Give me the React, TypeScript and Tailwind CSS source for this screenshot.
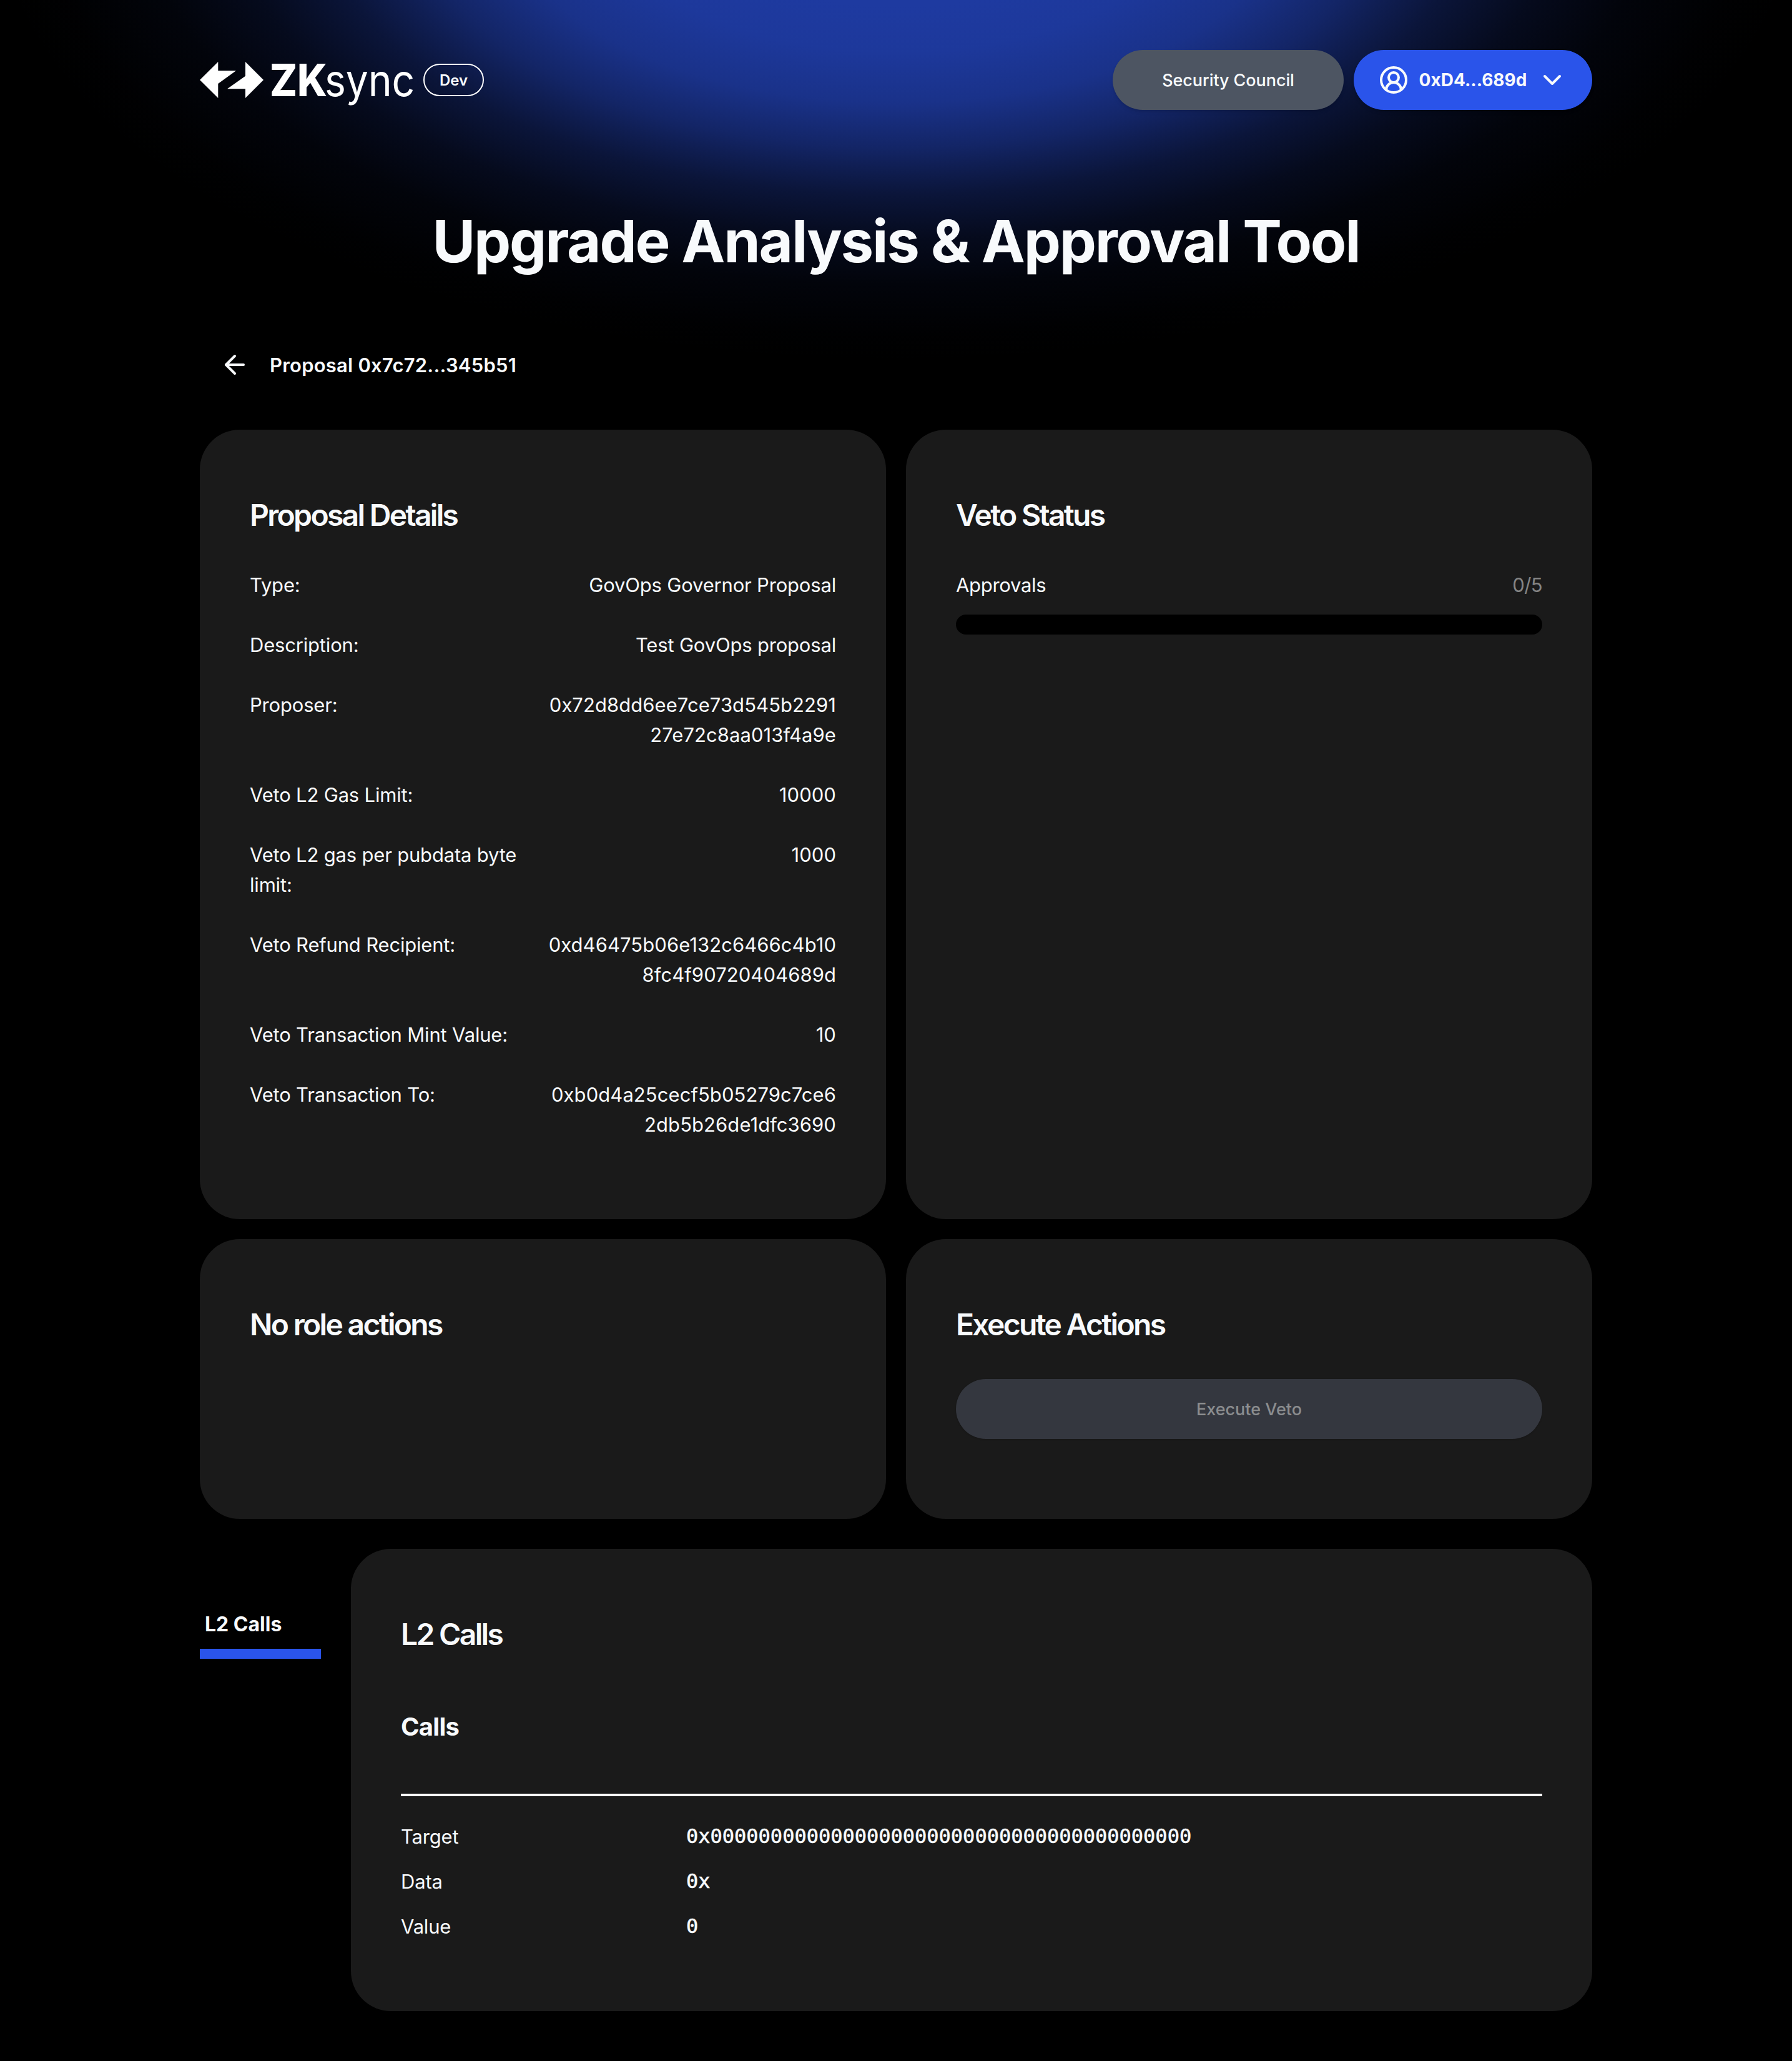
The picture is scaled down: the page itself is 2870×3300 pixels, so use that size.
import type { ReactNode } from "react";
import { ArrowLeft, ChevronDown, CircleUserRound } from "lucide-react";

const details: { label: string; value: string; numeric?: boolean }[] = [
  { label: "Type:", value: "GovOps Governor Proposal" },
  { label: "Description:", value: "Test GovOps proposal" },
  { label: "Proposer:", value: "0x72d8dd6ee7ce73d545b229127e72c8aa013f4a9e", numeric: true },
  { label: "Veto L2 Gas Limit:", value: "10000", numeric: true },
  { label: "Veto L2 gas per pubdata byte limit:", value: "1000", numeric: true },
  { label: "Veto Refund Recipient:", value: "0xd46475b06e132c6466c4b108fc4f90720404689d", numeric: true },
  { label: "Veto Transaction Mint Value:", value: "10", numeric: true },
  { label: "Veto Transaction To:", value: "0xb0d4a25cecf5b05279c7ce62db5b26de1dfc3690", numeric: true },
];

const call: { label: string; value: string }[] = [
  { label: "Target", value: "0x0000000000000000000000000000000000000000" },
  { label: "Data", value: "0x" },
  { label: "Value", value: "0" },
];

function Card({ title, className = "", children }: { title: string; className?: string; children?: ReactNode }) {
  return (
    <section className={`rounded-[64px] bg-[#1a1a1a] px-20 pt-[113px] ${className}`}>
      <h2 className="mb-[63px] text-[48px] leading-[48px] font-semibold tracking-[-0.056em] text-slate-50">{title}</h2>
      {children}
    </section>
  );
}

function Logo() {
  return (
    <svg width="346" height="96" viewBox="0 0 346 96" fill="#fff" className="block overflow-visible">
      <path d="M0 48 29.3 19V33.3H58L29.3 54V77Z" />
      <path d="M102 48 73 77V62.3H44L73 41.7V19Z" />
      <text x="112" y="74" fontSize="71" fontWeight="800" textLength="92" lengthAdjust="spacingAndGlyphs">ZK</text>
      <text x="200" y="74" fontSize="71" fontWeight="400" textLength="144" lengthAdjust="spacingAndGlyphs">sync</text>
    </svg>
  );
}

export default function App() {
  return (
    <div className="relative h-[3300px] w-[2870px] overflow-hidden bg-black font-['Inter',sans-serif] text-[31px] leading-[48px] tracking-[-0.006em] text-slate-50">
      <div className="absolute inset-x-0 top-0 h-[580px] bg-[radial-gradient(1450px_730px_at_50%_-150px,rgb(30_58_160)_22%,rgb(30_58_160/0.97)_32%,rgb(30_58_160/0.86)_43%,rgb(30_58_160/0.64)_53%,rgb(30_58_160/0.52)_57.2%,rgb(30_58_160/0.36)_63.3%,rgb(30_58_160/0.18)_73%,rgb(30_58_160/0.065)_83%,rgb(30_58_160/0.012)_94%,transparent_100%)]" />
      <div className="relative px-80">
        <header className="flex items-center justify-between pt-20">
          <div className="flex items-center gap-3">
            <Logo />
            <span className="flex h-[52px] w-[97px] items-center justify-center rounded-full border-[2px] border-white pt-[2px] text-[24px] font-semibold tracking-normal">
              Dev
            </span>
          </div>
          <div className="flex gap-4">
            <button className="flex h-24 w-[370px] items-center justify-center rounded-full bg-[#4d5562] pt-px text-[27px] font-medium tracking-[-0.003em] shadow-md">
              Security Council
            </button>
            <button className="flex h-24 w-[382px] items-center justify-between rounded-full bg-[#2a54ea] px-10 text-[28px] font-bold tracking-normal shadow-md">
              <CircleUserRound size={48} strokeWidth={2} />
              <span>0xD4...689d</span>
              <ChevronDown size={48} strokeWidth={2} />
            </button>
          </div>
        </header>

        <h1 className="mt-[162px] text-center text-[94px] leading-[96px] font-bold tracking-[-0.0235em]">
          Upgrade Analysis &amp; Approval Tool
        </h1>

        <div className="mt-[126px] flex h-12 items-center gap-8 pl-8">
          <ArrowLeft size={48} strokeWidth={2} />
          <span className="pt-[2px] font-semibold tracking-[0.007em]">Proposal 0x7c72...345b51</span>
        </div>

        <main className="mt-20 grid grid-cols-2 gap-8">
          <Card title="Proposal Details" className="h-[1264px]">
            <dl className="flex flex-col gap-12 pt-px">
              {details.map((d) => (
                <div key={d.label} className="grid grid-cols-2">
                  <dt>{d.label}</dt>
                  <dd className={`text-right break-words ${d.numeric ? "tracking-[0.002em]" : ""}`}>{d.value}</dd>
                </div>
              ))}
            </dl>
          </Card>
          <Card title="Veto Status">
            <div className="flex justify-between pt-px">
              <span className="tracking-[-0.01em]">Approvals</span>
              <span className="tracking-[-0.02em] text-[#848484]">0/5</span>
            </div>
            <div className="mt-[23px] h-8 rounded-full bg-black" />
          </Card>
          <Card title="No role actions" className="h-[448px]" />
          <Card title="Execute Actions">
            <button className="flex h-24 w-full items-center justify-center rounded-full bg-[#34373f] pt-[2px] text-[27px] font-medium tracking-normal text-[#8b8d8f] shadow-sm">
              Execute Veto
            </button>
          </Card>
        </main>

        <div className="mt-12 flex gap-12">
          <nav className="w-[194px] pt-[97px]">
            <div className="border-b-[16px] border-[#2a54ea] px-2 pb-[15px] text-[32px] font-bold tracking-normal">L2 Calls</div>
          </nav>
          <Card title="L2 Calls" className="h-[740px] flex-1">
            <h3 className="pt-[33px] text-[40px] leading-[56px] font-bold tracking-[-0.018em]">Calls</h3>
            <div className="mt-[79px] border-t-[4px] border-white pt-[41px]">
              <dl className="flex flex-col gap-6">
                {call.map((c) => (
                  <div key={c.label} className="grid grid-cols-4">
                    <dt>{c.label}</dt>
                    <dd className="col-span-3 font-['DejaVu_Sans_Mono',monospace] text-[32px] leading-[46px] tracking-normal [-webkit-text-stroke:0.6px]">
                      {c.value}
                    </dd>
                  </div>
                ))}
              </dl>
            </div>
          </Card>
        </div>
      </div>
    </div>
  );
}
